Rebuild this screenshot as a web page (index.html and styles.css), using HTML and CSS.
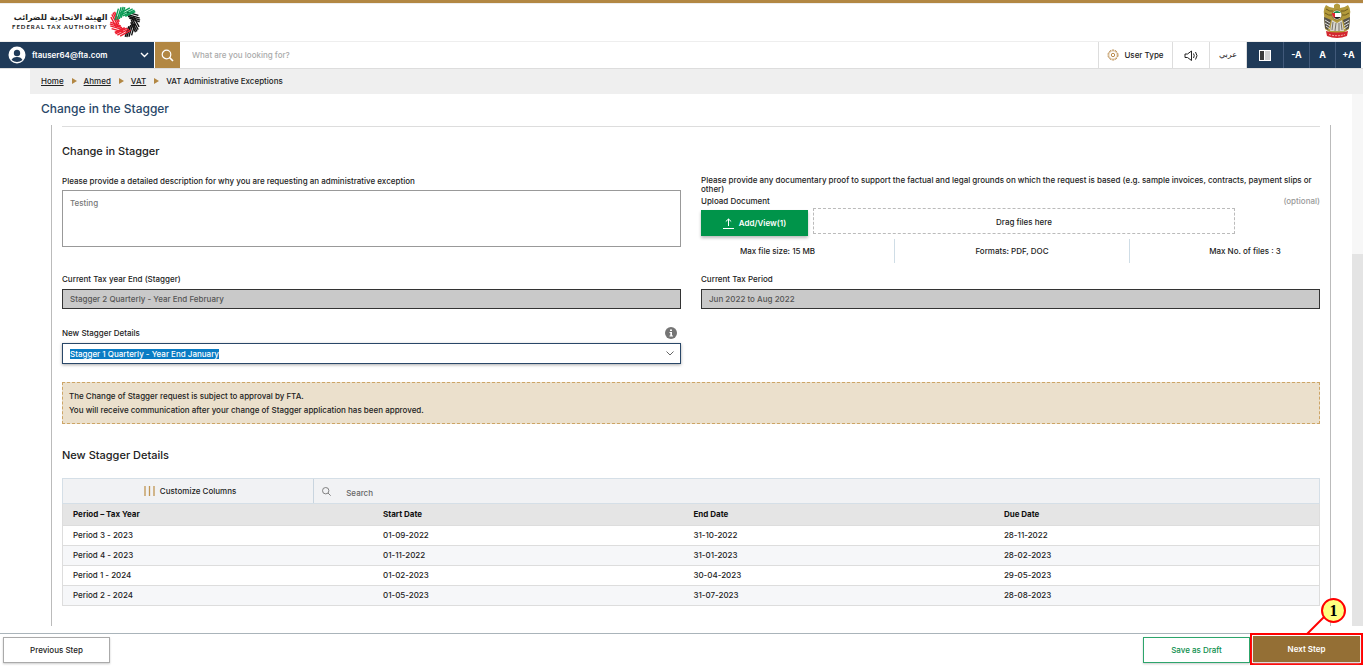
FILE: index.html
```
<!DOCTYPE html>
<html lang="en">
<head>
    <meta charset="UTF-8">
    <meta name="viewport" content="width=device-width, initial-scale=1.0">
    <title>Change in the Stagger</title>
    <link rel="stylesheet" href="styles.css">
</head>
<body>
    <header class="brand">
        <a class="logo" href="#">
            <span class="logo-text">
                <span class="logo-ar" lang="ar" dir="rtl">الهيئة الاتحادية للضرائب</span>
                <span class="logo-en">FEDERAL TAX AUTHORITY</span>
            </span>
            <svg class="logo-mark" viewBox="-16 -16 32 32" aria-hidden="true">
                <defs>
                    <g id="blade" fill="none" stroke-width="1.4">
                        <path d="M-7.500 -6.700L1 -14.900M-5.500 -5.800L4 -14.700M-3.500 -5.500L6 -14M-1.200 -5.600L7.200 -12.800"/>
                    </g>
                </defs>
                <use href="#blade" stroke="#111" transform="rotate(60)"/>
                <use href="#blade" stroke="#111" transform="rotate(105)"/>
                <use href="#blade" stroke="#111" transform="rotate(150)"/>
                <use href="#blade" stroke="#ee1c2e" transform="rotate(195)"/>
                <use href="#blade" stroke="#ee1c2e" transform="rotate(240)"/>
                <use href="#blade" stroke="#ee1c2e" transform="rotate(285)"/>
                <use href="#blade" stroke="#0b9d57" transform="rotate(330)"/>
                <use href="#blade" stroke="#0b9d57" transform="rotate(15)"/>
            </svg>
        </a>
        <svg class="emblem" viewBox="0 0 28 35" aria-hidden="true">
            <path d="M3 2Q7 5 11 5L11 2Q14-1 17 2L17 5Q21 5 25 2Q28 6 27 11L26 26L20 30H8L2 26L1 11Q0 6 3 2Z" fill="#b39a3c"/>
            <path d="M3 6Q7 9 10 8M2 10Q6 13 9 12M25 6Q21 9 18 8M26 10Q22 13 19 12" fill="none" stroke="#6d5a1c"/>
            <path d="M1 14L8 17L5 27L2 25ZM27 14L20 17L23 27L26 25Z" fill="#55524b"/>
            <path d="M2 17L7 20M2 20L7 23M3 23L7 26M26 17L21 20M26 20L21 23M25 23L21 26" stroke="#ddd"/>
            <path d="M9 17L14 20L19 17L21 28H7Z" fill="#d8d6ce"/>
            <path d="M10 19L9 27M13 20L12 28M16 20L16 28M18 19L19 27" stroke="#77736a"/>
            <circle cx="14" cy="12" r="5" fill="#fff" stroke="#8d7527"/>
            <path d="M10 10Q14 6 18 10Z" fill="#178b4b"/>
            <path d="M10 14H18Q14 18 10 14Z" fill="#222"/>
            <path d="M9 10H12V15Q9 14 9 10Z" fill="#df2431"/>
            <path d="M3 28Q14 31 25 28L24 33Q14 37 4 33Z" fill="#d3272f"/>
            <path d="M6 31.500Q14 34 22 31.500" fill="none" stroke="#f3aaaa" stroke-dasharray="2 1"/>
        </svg>
    </header>

    <nav class="topbar">
        <button type="button" class="user">
            <svg width="18" height="18" viewBox="0 0 18 18" aria-hidden="true">
                <circle cx="9" cy="9" r="8.500" fill="#fff"/>
                <circle cx="9" cy="7" r="3.200" fill="#1f3a58"/>
                <path d="M3.500 14Q5 10.800 9 11Q13 10.800 14.500 14Q9 18 3.500 14Z" fill="#1f3a58"/>
            </svg>
            <span>ftauser64@fta.com</span>
            <svg class="push" width="9" height="6" viewBox="0 0 9 6" aria-hidden="true"><path d="M1 1L4.500 4.500L8 1" fill="none" stroke="#fff" stroke-width="1.400"/></svg>
        </button>
        <button type="button" class="search-btn" aria-label="Search">
            <svg width="13" height="13" viewBox="0 0 13 13" aria-hidden="true"><circle cx="5.500" cy="5.500" r="4.300" fill="none" stroke="#fff" stroke-width="1.200"/><path d="M8.600 8.600L12 12" stroke="#fff" stroke-width="1.600"/></svg>
        </button>
        <input class="site-search" type="text" placeholder="What are you looking for?" aria-label="Site search">
        <button type="button" class="tool tool-type">
            <svg width="12" height="12" viewBox="0 0 12 12" fill="none" stroke="#b98a4b" aria-hidden="true"><circle cx="6" cy="6" r="5" stroke-dasharray="2.200 0.940"/><circle cx="6" cy="6" r="4.200" stroke-width="0.600"/><circle cx="6" cy="6" r="1.700"/></svg>
            User Type
        </button>
        <button type="button" class="tool" aria-label="Read aloud">
            <svg width="14" height="11" viewBox="0 0 14 11" fill="none" stroke="#222" aria-hidden="true"><path d="M1 4V7.500H3.500L7.500 10.500V1L3.500 4ZM9.500 3.500Q11 5.700 9.500 8M11.500 2Q14.500 5.700 11.500 9.500"/></svg>
        </button>
        <button type="button" class="tool tool-ar" lang="ar">عربي</button>
        <button type="button" class="tool tool-dark" aria-label="Contrast">
            <svg width="12" height="11" viewBox="0 0 12 11" aria-hidden="true"><path d="M0 0H12V11H0Z" fill="#fff"/><path d="M1 1H5V10H1Z" fill="#3b3b3b"/><path d="M6 1H11V10H6Z" fill="#d2d2d2"/></svg>
        </button>
        <button type="button" class="tool tool-dark tool-size">-A</button>
        <button type="button" class="tool tool-dark tool-size">A</button>
        <button type="button" class="tool tool-dark tool-size">+A</button>
    </nav>

    <div class="breadcrumb">
        <a href="#">Home</a><i></i>
        <a href="#">Ahmed</a><i></i>
        <a href="#">VAT</a><i></i>
        <span>VAT Administrative Exceptions</span>
    </div>

    <div class="page">
        <main class="main">
            <h1>Change in the Stagger</h1>
            <div class="panel">
                <h2>Change in Stagger</h2>
                <div class="columns">
                    <div class="field">
                        <label for="reason">Please provide a detailed description for why you are requesting an administrative exception</label>
                        <textarea id="reason">Testing</textarea>
                    </div>
                    <div class="upload">
                        <p class="upload-text">Please provide any documentary proof to support the factual and legal grounds on which the request is based (e.g. sample invoices, contracts, payment slips or other)</p>
                        <div class="upload-label"><span>Upload Document</span><span class="optional">(optional)</span></div>
                        <div class="upload-row">
                            <button type="button" class="add-btn">
                                <svg width="11" height="11" viewBox="0 0 11 11" fill="none" stroke="#fff" aria-hidden="true"><path d="M5.500 8V1M2.800 3.500L5.500 1L8.200 3.500M0 10.500H11"/></svg>
                                Add/View(1)
                            </button>
                            <div class="drop">Drag files here</div>
                        </div>
                        <div class="limits">
                            <span>Max file size: 15 MB</span>
                            <span>Formats: PDF, DOC</span>
                            <span>Max No. of files : 3</span>
                        </div>
                    </div>
                </div>

                <div class="columns row-current">
                    <div class="field">
                        <label for="current">Current Tax year End (Stagger)</label>
                        <input id="current" type="text" value="Stagger 2 Quarterly - Year End February" readonly>
                    </div>
                    <div class="field">
                        <label for="period">Current Tax Period</label>
                        <input id="period" type="text" value="Jun 2022 to Aug 2022" readonly>
                    </div>
                </div>

                <div class="columns row-new">
                    <div class="field">
                        <div class="label-row">
                            <label for="stagger">New Stagger Details</label>
                            <svg width="12" height="12" viewBox="0 0 12 12" aria-hidden="true"><circle cx="6" cy="6" r="6" fill="#757575"/><path d="M5 2.500H7V4H5ZM4.500 5H7V8.500H8V9.500H4.500V8.500H5.300V6H4.500Z" fill="#fff"/></svg>
                        </div>
                        <div class="select-box">
                            <select id="stagger">
                                <option>Stagger 1 Quarterly - Year End January</option>
                            </select>
                            <svg width="8" height="5" viewBox="0 0 8 5" aria-hidden="true"><path d="M0.500 0.500L4 4L7.500 0.500" fill="none" stroke="#666"/></svg>
                        </div>
                    </div>
                </div>

                <div class="notice">
                    <p>The Change of Stagger request is subject to approval by FTA.</p>
                    <p>You will receive communication after your change of Stagger application has been approved.</p>
                </div>

                <h2>New Stagger Details</h2>
                <div class="table-tools">
                    <button type="button" class="customize">
                        <svg width="11" height="10" viewBox="0 0 11 10" aria-hidden="true"><path d="M1 0V10M5.500 0V10M10 0V10" stroke="#c09553" stroke-width="1.300"/></svg>
                        Customize Columns
                    </button>
                    <svg width="9" height="9" viewBox="0 0 9 9" fill="none" stroke="#666" stroke-width="0.800" aria-hidden="true"><circle cx="3.700" cy="3.700" r="3.200"/><path d="M6 6L8.700 8.700"/></svg>
                    <input type="text" placeholder="Search" aria-label="Search table">
                </div>
                <table>
                    <thead>
                        <tr><th>Period – Tax Year</th><th>Start Date</th><th>End Date</th><th>Due Date</th></tr>
                    </thead>
                    <tbody>
                        <tr><td>Period 3 - 2023</td><td>01-09-2022</td><td>31-10-2022</td><td>28-11-2022</td></tr>
                        <tr><td>Period 4 - 2023</td><td>01-11-2022</td><td>31-01-2023</td><td>28-02-2023</td></tr>
                        <tr><td>Period 1 - 2024</td><td>01-02-2023</td><td>30-04-2023</td><td>29-05-2023</td></tr>
                        <tr><td>Period 2 - 2024</td><td>01-05-2023</td><td>31-07-2023</td><td>28-08-2023</td></tr>
                    </tbody>
                </table>
            </div>
        </main>
        <div class="scroll-track"><div class="scroll-thumb"></div></div>
    </div>

    <footer class="actions">
        <button type="button" class="btn">Previous Step</button>
        <button type="button" class="btn btn-draft">Save as Draft</button>
        <div class="callout">
            <button type="button" class="btn btn-next">Next Step</button>
            <svg class="callout-line" width="20" height="20" viewBox="0 0 20 20" aria-hidden="true"><path d="M1 19L18 2" stroke="#f00" stroke-width="2"/></svg>
            <span class="callout-num">1</span>
        </div>
    </footer>
</body>
</html>
```
FILE: styles.css
```
* {
    box-sizing: border-box;
}
body {
    display: flex;
    flex-direction: column;
    min-height: 100vh;
    margin: 0;
    background: #fff;
    color: #222;
    font-family: Inter, "Open Sans", sans-serif;
    font-size: 8px;
    font-weight: 500;
    line-height: 10px;
}
button, input, select, textarea {
    font: inherit;
    color: inherit;
    margin: 0;
    padding: 0;
    border: 0;
    border-radius: 0;
    background: none;
}
button {
    cursor: pointer;
}
svg {
    flex: none;
}
h1, h2, p {
    margin: 0;
}

/* header */
.brand {
    display: flex;
    justify-content: space-between;
    height: 42px;
    padding: 0 12px;
    border-top: 3px solid #b28743;
    border-bottom: 1px solid #eee;
    box-shadow: inset 0 1px #eee;
}
.logo {
    display: flex;
    align-items: center;
    gap: 2px;
    color: #222;
    text-decoration: none;
}
.logo-text {
    display: flex;
    flex-direction: column;
}
.logo-ar {
    font-family: "DejaVu Sans", sans-serif;
    font-size: 8px;
    font-weight: 700;
    white-space: nowrap;
}
.logo-en {
    font-family: Lato, sans-serif;
    font-size: 6px;
    font-weight: 700;
    letter-spacing: 1px;
    line-height: 8px;
}
.logo-mark {
    width: 32px;
    height: 32px;
}
.emblem {
    width: 28px;
    height: 35px;
}
.topbar {
    display: flex;
    height: 27px;
    padding-right: 2px;
    border-bottom: 1px solid #ddd;
}
.user {
    display: flex;
    align-items: center;
    gap: 6px;
    width: 154px;
    padding: 0 5px 0 8px;
    background: #1f3a58;
    color: #fff;
    font-weight: 600;
}
.push {
    margin-left: auto;
}
.search-btn {
    display: flex;
    align-items: center;
    justify-content: center;
    width: 26px;
    border-left: 1px solid #fff;
    background: #b28743;
}
.site-search {
    flex: 1;
    padding: 0 12px;
}
input::placeholder {
    color: #aaa;
    opacity: 1;
}
.tool {
    display: flex;
    align-items: center;
    justify-content: center;
    gap: 5px;
    width: 37px;
    border-left: 1px solid #ddd;
}
.tool-type {
    width: 74px;
}
.tool-ar {
    font-family: "DejaVu Sans", sans-serif;
}
.tool-dark {
    background: #1f3a58;
    color: #fff;
    font-weight: 700;
}
.tool-size {
    width: 26px;
    border-color: #41597a;
    font-size: 9px;
}
.breadcrumb {
    display: flex;
    align-items: center;
    height: 25px;
    margin-left: 30px;
    padding: 0 0 2px 11px;
    background: #efefef;
}
.breadcrumb a {
    color: #222;
    text-underline-offset: 1px;
}
.breadcrumb i {
    margin: 0 7px 0 8px;
    border: 3px solid transparent;
    border-left: 5px solid #b28743;
    border-right: 0;
}

/* page body */
.page {
    display: flex;
    flex: 1;
    margin-bottom: 7px;
}
.main {
    flex: 1;
    display: flex;
    flex-direction: column;
    padding: 8px 21px 0 41px;
}
h1 {
    color: #294768;
    font-size: 12px;
    font-weight: 500;
    line-height: 14px;
}
.panel {
    flex: 1;
    margin: 9px 0 0 10px;
    padding: 0 10px 20px;
    border: solid #bbb;
    border-width: 0 1px;
}
h2 {
    font-size: 11px;
    font-weight: 500;
    line-height: 12px;
}
.panel h2:first-child {
    padding: 18px 0 19px;
    border-top: 1px solid #ddd;
    margin-top: 1px;
}
.columns {
    display: grid;
    grid-template-columns: 1fr 1fr;
    gap: 20px;
}
.field {
    display: flex;
    flex-direction: column;
}
.field label {
    line-height: 10px;
}
textarea {
    height: 57px;
    margin-top: 4px;
    padding: 7px;
    border: 1px solid #999;
    color: #777;
    resize: none;
}
.upload-text {
    line-height: 9px;
}
.upload-label {
    display: flex;
    justify-content: space-between;
    margin-top: 2px;
}
.optional {
    color: #999;
}
.upload-row {
    display: flex;
    align-items: flex-start;
    gap: 5px;
    margin-top: 2px;
}
.add-btn {
    display: flex;
    align-items: center;
    justify-content: center;
    gap: 5px;
    width: 107px;
    height: 26px;
    margin-top: 2px;
    background: #00944a;
    box-shadow: 0 2px 3px #bbb;
    color: #fff;
    font-weight: 600;
}
.drop {
    flex: 1;
    height: 26px;
    margin-right: 85px;
    border: 1px dashed #bbb;
    line-height: 26px;
    text-align: center;
}
.limits {
    display: grid;
    grid-template-columns: 194fr 235fr 190fr;
    margin-top: 3px;
    line-height: 24px;
    text-align: center;
}
.limits span {
    border-right: 1px solid #cfdde6;
}
.limits span:first-child {
    padding-right: 40px;
}
.limits span:last-child {
    padding-left: 40px;
    border: 0;
}
.row-current {
    margin-top: 11px;
}
.row-current input {
    height: 20px;
    margin-top: 5px;
    padding: 0 7px;
    border: 1px solid #333;
    background: #c9c9c9;
    color: #555;
}
.row-new {
    margin-top: 18px;
}
.label-row {
    display: flex;
    align-items: center;
    justify-content: space-between;
    padding-right: 4px;
}
.select-box {
    display: flex;
    align-items: center;
    justify-content: space-between;
    height: 21px;
    margin-top: 4px;
    padding: 0 6px 0 7px;
    border: 1px solid #294768;
    box-shadow: 0 1px 3px #aaa;
}
.select-box select {
    height: 10px;
    appearance: none;
    background: #0a7cc4;
    color: #fff;
}
.notice {
    margin: 18px 0 25px;
    padding: 6px;
    border: 1px dashed #cda566;
    background: #ebe0cc;
    line-height: 14px;
}

/* stagger table */
.table-tools {
    display: flex;
    align-items: center;
    height: 26px;
    margin-top: 17px;
    border: 1px solid #d5dfe7;
    background: #f1f2f4;
}
.customize {
    display: flex;
    align-items: center;
    justify-content: center;
    gap: 5px;
    width: 20%;
    height: 100%;
    margin-right: 8px;
    padding-left: 4px;
    border-right: 1px solid #c9d5df;
}
.table-tools input {
    flex: 1;
    margin: 3px 0 0 15px;
}
.table-tools input::placeholder {
    color: #666;
}
table {
    width: 100%;
    border: 1px solid #ddd;
    border-top: 0;
    border-collapse: collapse;
    table-layout: fixed;
}
th, td {
    height: 20px;
    padding: 0 10px;
    border-bottom: 1px solid #ddd;
    text-align: left;
}
th:not(:last-child) {
    width: 24.7%;
}
th {
    height: 21px;
    background: #e5e5e5;
    color: #111;
    font-weight: 700;
}
tbody tr:nth-child(even) {
    background: #f6f7f9;
}
.scroll-track {
    display: flex;
    flex-direction: column;
    justify-content: flex-end;
    width: 11px;
    background: #f7f7f7;
}
.scroll-thumb {
    height: 70%;
    background: #e4e4e4;
}

/* footer */
.actions {
    display: flex;
    height: 33px;
    padding: 3px 0 0 3px;
    border-top: 1px solid #aab4ba;
}
.btn {
    width: 107px;
    height: 26px;
    border: 1px solid #aaa;
    background: #fff;
    box-shadow: 0 1px 2px #ccc;
}
.btn-draft {
    margin-left: auto;
    border-color: #2da56c;
    color: #0b8e4c;
}
.callout {
    position: relative;
    height: 32px;
    margin-top: -4px;
    border: 2px solid #f00;
    padding: 1px;
}
.btn-next {
    border: 0;
    background: #946f35;
    color: #fff;
    font-weight: 600;
}
.callout-line {
    position: absolute;
    right: 35px;
    bottom: 28px;
}
.callout-num {
    position: absolute;
    right: 15px;
    bottom: 40px;
    width: 25px;
    height: 25px;
    border: 2px solid #f00;
    border-radius: 50%;
    background: #ffff80;
    color: #000;
    font: bold 16px/21px "Liberation Serif", serif;
    text-align: center;
}
```
